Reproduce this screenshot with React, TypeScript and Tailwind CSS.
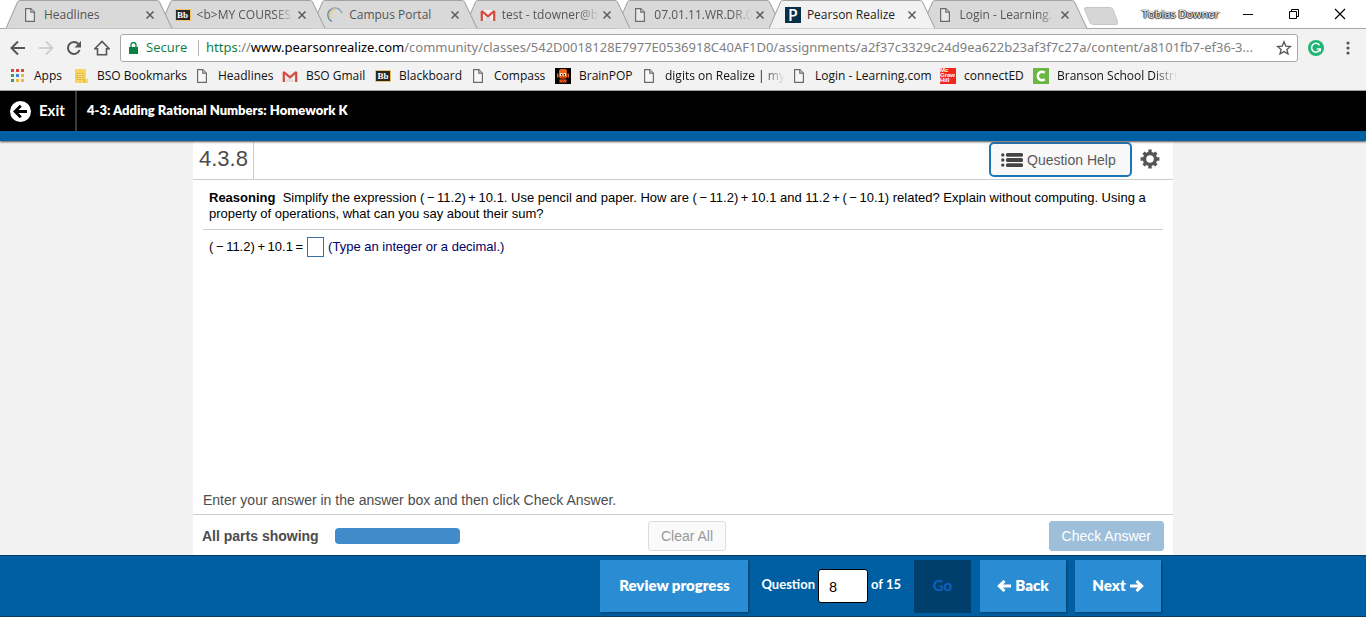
import type { ReactNode } from 'react'
import { useState } from 'react'

interface Tab {
  title: string
  icon: ReactNode
  active?: boolean
  fade?: boolean
}

interface Bookmark {
  label: string
  icon: ReactNode
  width: string
  fade?: boolean
}

function PageIcon() {
  return (
    <svg className="w-4 h-4 shrink-0" viewBox="0 0 16 16" fill="#fff" fillOpacity="0.4" stroke="#6b6b6b" strokeWidth="1.2">
      <path d="M3.6 1.6h5.2l3.6 3.6v9.2H3.6z" />
      <path d="M8.8 1.6v3.6h3.6" />
    </svg>
  )
}

function BlackboardIcon() {
  return (
    <span className="w-4 h-4 shrink-0 flex items-center justify-center">
      <span className="w-4 h-3 bg-[#262626] border border-[#f0c36a] flex items-center justify-center text-[9px] leading-none font-bold text-white font-['Liberation_Serif',serif]">
        Bb
      </span>
    </span>
  )
}

function GmailIcon() {
  return (
    <svg className="w-4 h-4 shrink-0" viewBox="0 0 16 16">
      <path d="M1 3h14v11H1z" fill="#f1eeee" />
      <path d="M3 13.8 8 9l5 4.8z" fill="#dcdcdc" />
      <path d="M1.8 14V4l6.2 5.4L14.2 4v10" fill="none" stroke="#d54b3d" strokeWidth="2.2" strokeLinejoin="bevel" />
    </svg>
  )
}

function CampusIcon() {
  return (
    <svg className="w-4 h-4 shrink-0" viewBox="0 0 16 16" fill="none" strokeLinecap="round">
      <path d="M4.5 14.2A7 7 0 0 1 4 2.2" stroke="#5f87a8" strokeWidth="1.3" />
      <path d="M4 2.2a7 7 0 0 1 10.8 4" stroke="#8ba4b5" strokeWidth="1.2" />
      <path d="M3.4 10.5A5.6 5.6 0 0 1 7.4 2.6" stroke="#e8c66a" strokeWidth="1.2" />
    </svg>
  )
}

function PearsonIcon() {
  return (
    <span className="w-4 h-4 shrink-0 bg-[#07304b] text-white text-base leading-4 text-center font-semibold font-['Open_Sans',sans-serif]">P</span>
  )
}

function AppsIcon() {
  const colors = ['#d9453c', '#d9453c', '#d9453c', '#3f9c58', '#4285d4', '#e9b93a', '#3f9c58', '#e9b93a', '#e9b93a']
  return (
    <svg className="w-4 h-4 shrink-0" viewBox="0 0 16 16">
      {colors.map((color, i) => (
        <rect key={i} x={1 + (i % 3) * 5} y={1 + Math.floor(i / 3) * 5} width="3" height="3" fill={color} />
      ))}
    </svg>
  )
}

function SitesIcon() {
  return (
    <svg className="w-4 h-4 shrink-0" viewBox="0 0 16 16">
      <path d="M2 1h11v10h2v4H2z" fill="#f8d460" />
      <path d="M4 5.5h6v6H4z" fill="#fdf0b8" stroke="#d9ac2c" strokeWidth="0.8" />
      <path d="M4 7.5h6M4 9.5h6M7 7.5v4M11.5 11v4" stroke="#d9ac2c" strokeWidth="0.8" />
    </svg>
  )
}

function BrainPopIcon() {
  return (
    <svg className="w-4 h-4 shrink-0" viewBox="0 0 16 16">
      <path d="M0 0h16v16H0z" fill="#0a0504" />
      <path d="M4 2.5 5.500 1h5L12 2.500V9l-1.500 1.500h-5L4 9zM2 5.5h1.5v4H2zM12.500 5.5H14v4h-1.5zM4.500 11.500h7v3h-7z" fill="#e8621f" />
      <path d="M5 5h2.500v3H5zM8.500 5H11v3H8.500z" fill="#fbe9c8" />
      <path d="M6 6h1v1.500H6zM9 6h1v1.500H9z" fill="#111" />
      <path d="M6 9.200h4v1H6zM6 12h1v1H6zM8 12h1v1H8zM7 13h1v1H7zM9 13h1v1H9z" fill="#c1200d" />
    </svg>
  )
}

function McGrawIcon() {
  return (
    <span className="w-4 h-4 shrink-0 bg-[#f0281c] text-white text-[6px] leading-[5px] font-bold font-['Liberation_Sans',sans-serif]">
      Mc
      <br />
      Graw
      <br />
      Hill
    </span>
  )
}

function BransonIcon() {
  return (
    <svg className="w-4 h-4 shrink-0" viewBox="0 0 16 16">
      <path d="M0 0h16v16H0z" fill="#6cb644" />
      <path d="M11.800 4.600C7.500 2.400 4.800 5 4.800 8s2.700 5.600 7 3.400" fill="none" stroke="#fff" strokeWidth="2.500" />
    </svg>
  )
}

const tabs: Tab[] = [
  { title: 'Headlines', icon: <PageIcon /> },
  { title: '<b>MY COURSES', icon: <BlackboardIcon />, fade: true },
  { title: 'Campus Portal', icon: <CampusIcon /> },
  { title: 'test - tdowner@b', icon: <GmailIcon />, fade: true },
  { title: '07.01.11.WR.DR.0', icon: <PageIcon />, fade: true },
  { title: 'Pearson Realize', icon: <PearsonIcon />, active: true },
  { title: 'Login - Learning.', icon: <PageIcon />, fade: true },
]

const bookmarks: Bookmark[] = [
  { label: 'Apps', icon: <AppsIcon />, width: 'w-[63px]' },
  { label: 'BSO Bookmarks', icon: <SitesIcon />, width: 'w-[121px]' },
  { label: 'Headlines', icon: <PageIcon />, width: 'w-[88px]' },
  { label: 'BSO Gmail', icon: <GmailIcon />, width: 'w-[93px]' },
  { label: 'Blackboard', icon: <BlackboardIcon />, width: 'w-[95px]' },
  { label: 'Compass', icon: <PageIcon />, width: 'w-[85px]' },
  { label: 'BrainPOP', icon: <BrainPopIcon />, width: 'w-[86px]' },
  { label: 'digits on Realize | my', icon: <PageIcon />, width: 'w-[150px]', fade: true },
  { label: 'Login - Learning.com', icon: <PageIcon />, width: 'w-[149px]' },
  { label: 'connectED', icon: <McGrawIcon />, width: 'w-[93px]' },
  { label: 'Branson School Distri', icon: <BransonIcon />, width: 'w-[150px]', fade: true },
]

const fadeRight = '[mask-image:linear-gradient(to_right,#000_80%,transparent)]'

function TabStrip() {
  return (
    <div className="flex h-7 bg-white pl-1.5">
      <div className="flex flex-1 min-w-0 isolate">
        {tabs.map((tab, i) => (
          <div
            key={tab.title}
            className={`relative flex-1 min-w-0 flex items-center pl-4 pt-0.5 ${tab.active ? 'z-20' : ''}`}
            style={tab.active ? undefined : { zIndex: tabs.length - i }}
          >
            <svg
              className="absolute left-0 top-0 h-[29px] w-[calc(100%+14px)] max-w-none"
              viewBox="0 0 166 29"
              preserveAspectRatio="none"
            >
              <path
                d="M0 28.500 11.500 2Q12.500 .5 14 .5H150Q152 .5 153 2L165.500 28.500"
                fill={tab.active ? '#f2f2f2' : '#d9d9d9'}
                stroke="#a3a3a3"
              />
            </svg>
            <button className="relative flex flex-1 min-w-0 items-center gap-1.5 text-left">
              {tab.icon}
              <span
                className={`flex-1 min-w-0 whitespace-nowrap ${tab.active ? 'text-[#222]' : 'text-[#555]'} ${tab.fade ? fadeRight : ''}`}
              >
                {tab.title}
              </span>
            </button>
            <button aria-label="Close tab" className="relative w-4 h-4 mr-px shrink-0 flex items-center justify-center">
              <svg className="w-2 h-2" viewBox="0 0 8 8" stroke="#5a5a5a" strokeWidth="1.5">
                <path d="M.5 .5l7 7M7.500 .5l-7 7" />
              </svg>
            </button>
          </div>
        ))}
      </div>
      <div className="w-[292px] shrink-0 flex items-center pl-2.5">
        <button aria-label="New tab">
          <svg className="w-[34px] h-[18px] mt-1" viewBox="0 0 34 18">
            <path d="M2 .5h24q2 0 3 2l5 13q.5 2-2 2H9q-2 0-3-2L.5 2.500Q0 .5 2 .5z" fill="#d6d6d6" stroke="#c6c6c6" />
          </svg>
        </button>
        <button className="ml-6 w-[76px] text-[11px] text-left whitespace-nowrap text-white [text-shadow:0_0_1px_#000,1px_0_1px_#333,-1px_0_1px_#333,0_1px_1px_#333]">
          Tobias Downer
        </button>
        <div className="flex-1 flex justify-between pl-6 pr-5 text-black">
          <button aria-label="Minimize">
            <svg className="w-3 h-3" viewBox="0 0 12 12" fill="none" stroke="currentColor">
              <path d="M1 6.500h10" />
            </svg>
          </button>
          <button aria-label="Restore">
            <svg className="w-3 h-3" viewBox="0 0 12 12" fill="none" stroke="currentColor">
              <path d="M1.500 3.500h7v7h-7zM3.500 3.500v-2h7v7h-2" />
            </svg>
          </button>
          <button aria-label="Close">
            <svg className="w-3 h-3" viewBox="0 0 12 12" fill="none" stroke="currentColor" strokeWidth="1.200">
              <path d="M1 1l10 10M11 1L1 11" />
            </svg>
          </button>
        </div>
      </div>
    </div>
  )
}

function Toolbar() {
  return (
    <div className="flex items-center h-[38px] bg-[#f2f2f2] border-t border-[#a8a8a8] pl-2.5">
      <div className="flex items-center gap-3 text-[#555]">
        <button aria-label="Back">
          <svg className="w-4 h-4" viewBox="0 0 16 16" fill="none" stroke="currentColor" strokeWidth="2">
            <path d="M15 8H2M8 1.500 1.500 8 8 14.500" />
          </svg>
        </button>
        <button aria-label="Forward" className="text-[#d0d0d0]">
          <svg className="w-4 h-4" viewBox="0 0 16 16" fill="none" stroke="currentColor" strokeWidth="2">
            <path d="M1 8h13M8 1.500 14.500 8 8 14.500" />
          </svg>
        </button>
        <button aria-label="Reload">
          <svg className="w-4 h-4" viewBox="0 0 16 16" fill="none" stroke="currentColor" strokeWidth="2">
            <path d="M13.600 10A6 6 0 1 1 12.500 4" />
            <path d="M15 1v6.500H8.500z" fill="currentColor" stroke="none" />
          </svg>
        </button>
        <button aria-label="Home">
          <svg className="w-4 h-4" viewBox="0 0 16 16" fill="none" stroke="currentColor" strokeWidth="1.600">
            <path d="M.8 8.800 8 1.500l7.200 7.300H12.500v6h-9v-6z" />
          </svg>
        </button>
      </div>
      <div className="flex flex-1 min-w-0 items-center h-7 ml-2.5 pl-2 pr-[5px] bg-white border border-[#a8a8a8] rounded-[3px]">
        <svg className="w-[9px] h-3 shrink-0" viewBox="0 0 9 12">
          <path d="M0 5h9v7H0z" fill="#0b8043" />
          <path d="M2 5.500V3a2.500 2.500 0 0 1 5 0v2.500" fill="none" stroke="#0b8043" strokeWidth="1.300" />
        </svg>
        <span className="w-13 ml-2 text-[13px] text-[#0b8043]">Secure</span>
        <span className="w-px h-4 bg-[#b5b5b5]" />
        <div
          role="textbox"
          aria-label="Address"
          className="flex-1 min-w-0 ml-[7px] text-[13px] text-[#808080] whitespace-nowrap font-['Noto_Sans',sans-serif]"
        >
          <span className="text-[#0b8043]">https</span>://<span className="text-black">www.pearsonrealize.com</span>
          /community/classes/542D0018128E7977E0536918C40AF1D0/assignments/a2f37c3329c24d9ea622b23af3f7c27a/content/a8101fb7-ef36-3...
        </div>
        <button aria-label="Bookmark this page" className="shrink-0">
          <svg className="w-4 h-4" viewBox="0 0 16 16" fill="none" stroke="#555" strokeWidth="1.300">
            <path d="M8 1.800l1.800 4.300 4.600.4-3.500 3 1.100 4.500L8 11.600 4 14l1.100-4.500-3.500-3 4.600-.4z" />
          </svg>
        </button>
      </div>
      <button aria-label="Grammarly" className="ml-2.5">
        <svg className="w-4 h-4" viewBox="0 0 16 16">
          <circle cx="8" cy="8" r="8" fill="#1fb574" />
          <path d="M11.600 5.200A4.400 4.400 0 1 0 12.200 9H8.800M12.200 9v2.500" fill="none" stroke="#fff" strokeWidth="1.500" />
        </svg>
      </button>
      <button aria-label="Menu" className="ml-4 mr-2.5">
        <svg className="w-4 h-4" viewBox="0 0 16 16" fill="#555">
          <circle cx="8" cy="3" r="1.600" />
          <circle cx="8" cy="8" r="1.600" />
          <circle cx="8" cy="13" r="1.600" />
        </svg>
      </button>
    </div>
  )
}

function BookmarksBar() {
  return (
    <nav className="flex h-[25px] bg-[#f2f2f2] border-b border-[#a8a8a8] pl-2.5 pb-1 text-[#111]">
      {bookmarks.map((bookmark) => (
        <a key={bookmark.label} href="#" className={`flex items-center gap-2 shrink-0 whitespace-nowrap ${bookmark.width}`}>
          {bookmark.icon}
          <span className={bookmark.fade ? `w-[120px] ${fadeRight}` : ''}>{bookmark.label}</span>
        </a>
      ))}
    </nav>
  )
}

function CourseHeader() {
  return (
    <header className="flex items-center h-[50px] shrink-0 bg-black border-b-10 border-[#005fa2] text-white font-bold shadow-[0_1px_2px_#555] relative font-['Lato',sans-serif]">
      <a href="#" className="flex items-center gap-2 h-full w-[77px] pl-2.5 border-r-2 border-[#3a3a3a] text-[15px]">
        <svg className="w-[21px] h-[21px] shrink-0" viewBox="0 0 21 21">
          <circle cx="10.500" cy="10.500" r="10.500" fill="#fff" />
          <path d="M17 10.500H5.500M10.800 4.800 5 10.500l5.800 5.700" fill="none" stroke="#000" strokeWidth="2.800" />
        </svg>
        Exit
      </a>
      <h1 className="ml-2.5 text-[13px] font-extrabold">4-3: Adding Rational Numbers: Homework K</h1>
    </header>
  )
}

function GearIcon() {
  return (
    <svg className="w-5 h-5" viewBox="0 0 20 20">
      <circle cx="10" cy="10" r="5.500" fill="none" stroke="#555" strokeWidth="3.400" />
      <g stroke="#555" strokeWidth="3.400">
        <path d="M10 .6v3.400M10 16v3.400M.6 10H4M16 10h3.400M3.600 3.600l2.200 2.200M14.200 14.200l2.200 2.200M3.600 16.400l2.200-2.200M14.200 5.800l2.200-2.200" />
      </g>
    </svg>
  )
}

function Exercise() {
  const [answer, setAnswer] = useState('')

  return (
    <main className="flex flex-col flex-1 w-full max-w-[980px] mx-auto bg-white text-[#4c4c4c] font-['Liberation_Sans',Arial,sans-serif]">
      {/* Exercise toolbar */}
      <div className="flex items-start h-[39px] border-b border-[#c5cfcf]">
        <h2 className="h-[38px] w-[61px] pl-1.5 border-r border-[#c5cfcf] text-[22px] leading-9">4.3.8</h2>
        <button className="ml-auto mt-px flex items-center gap-1 h-[35px] w-[143px] pl-2.5 border-2 border-[#1c75b4] rounded-[5px] bg-[#f8f8f8] text-sm text-[#5a5a5a] whitespace-nowrap">
          <svg className="w-[22px] h-[14px] shrink-0" viewBox="0 0 22 14" fill="#444">
            <circle cx="1.800" cy="1.900" r="1.700" />
            <circle cx="1.800" cy="7" r="1.700" />
            <circle cx="1.800" cy="12.100" r="1.700" />
            <rect x="5" y="0" width="17" height="3.800" rx="1.500" />
            <rect x="5" y="5.100" width="17" height="3.800" rx="1.500" />
            <rect x="5" y="10.200" width="17" height="3.800" rx="1.500" />
          </svg>
          Question Help
        </button>
        <button aria-label="Settings" className="ml-2 mr-[13px] mt-2">
          <GearIcon />
        </button>
      </div>

      {/* Problem */}
      <div className="flex-1 px-2.5 pt-2.5 text-[13px] leading-4 text-black">
        <p className="px-1.5 pb-[7px] border-b border-[#c5cfcf]">
          <b>Reasoning</b>&nbsp; Simplify the expression (&thinsp;−&thinsp;11.2)&thinsp;+&thinsp;10.1. Use pencil and paper. How are
          (&thinsp;−&thinsp;11.2)&thinsp;+&thinsp;10.1 and 11.2&thinsp;+&thinsp;(&thinsp;−&thinsp;10.1) related? Explain without
          computing. Using a property of operations, what can you say about their sum?
        </p>
        <div className="flex items-center gap-1 px-1.5 pt-[7px]">
          <label htmlFor="answer">(&thinsp;−&thinsp;11.2)&thinsp;+&thinsp;10.1&thinsp;=</label>
          <input
            id="answer"
            value={answer}
            onChange={(e) => setAnswer(e.target.value)}
            className="w-[17px] h-5 border border-[#3a6ea5] bg-white text-center"
          />
          <span className="text-[#000066]">(Type an integer or a decimal.)</span>
        </div>
      </div>

      {/* Instructions and actions */}
      <p className="px-2.5 pb-1 text-sm border-b border-[#c5cfcf]">Enter your answer in the answer box and then click Check Answer.</p>
      <div className="grid grid-cols-[1fr_auto_1fr] items-center h-10 px-[9px] pt-0.5 text-sm">
        <div className="flex items-center gap-4 font-bold">
          All parts showing
          <div role="progressbar" aria-label="Parts showing" className="w-[125px] h-4 rounded bg-[#428bca]" />
        </div>
        <button className="h-[30px] ml-2 px-3 border border-[#dcdcdc] rounded-[3px] bg-[#fafafa] text-[#999]">Clear All</button>
        <button className="justify-self-end h-[30px] px-3 border border-[#9dbfda] rounded-[3px] bg-[#9dbfda] text-white">Check Answer</button>
      </div>
    </main>
  )
}

function FooterNav() {
  const [question, setQuestion] = useState('8')
  const button = 'h-[52px] bg-[#2a8dd4] shadow-[1px_1px_2px_#003c68] font-extrabold flex items-center justify-center gap-1'

  return (
    <footer className="h-[62px] bg-[#005fa2] border-y border-[#063e66] text-white font-['Lato',sans-serif]">
      <div className="flex items-center justify-end h-full w-full max-w-[980px] mx-auto pr-3 text-[15px]">
        <button className={`${button} w-[148px]`}>Review progress</button>
        <label htmlFor="question" className="ml-[13px] pb-0.5 text-[13px] font-bold">Question</label>
        <input
          id="question"
          value={question}
          onChange={(e) => setQuestion(e.target.value)}
          className="w-[50px] h-[34px] mx-[3px] pl-2.5 border border-black rounded-[3px] bg-white text-sm text-black"
        />
        <span className="pb-0.5 text-[13px] font-bold">of 15</span>
        <button className="w-[57px] h-[53px] ml-[13px] bg-[#003f6c] text-[#0d62c0] font-bold">Go</button>
        <button className={`${button} w-[86px] ml-[9px]`}>
          <svg className="w-[14px] h-3" viewBox="0 0 14 12" fill="none" stroke="currentColor" strokeWidth="3">
            <path d="M14 6H3M7.500 1 2.300 6l5.200 5" />
          </svg>
          Back
        </button>
        <button className={`${button} w-[86px] ml-[9px]`}>
          Next
          <svg className="w-[14px] h-3" viewBox="0 0 14 12" fill="none" stroke="currentColor" strokeWidth="3">
            <path d="M0 6h11M6.500 1l5.200 5-5.200 5" />
          </svg>
        </button>
      </div>
    </footer>
  )
}

export default function App() {
  return (
    <div className="min-h-screen flex flex-col bg-[#f2f2f2] overflow-hidden text-xs font-['Open_Sans','Noto_Sans',sans-serif]">
      <TabStrip />
      <Toolbar />
      <BookmarksBar />
      <CourseHeader />
      <Exercise />
      <FooterNav />
    </div>
  )
}
